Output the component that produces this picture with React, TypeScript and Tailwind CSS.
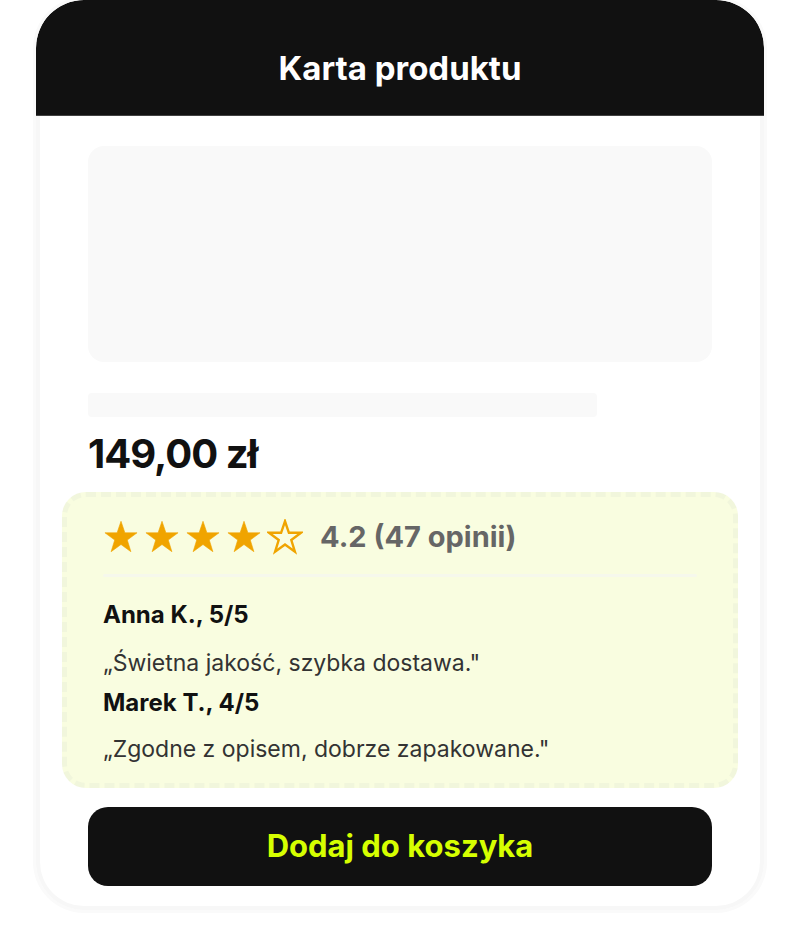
import React from "react";

function Star({ filled }: { filled: boolean }) {
  return (
    <svg width="36" height="36" viewBox="0 0 24 24" className="shrink-0">
      <polygon
        points="12,1.5 14.6,9.2 22.7,9.2 16.2,14 18.6,21.8 12,17 5.4,21.8 7.8,14 1.3,9.2 9.4,9.2"
        fill={filled ? "#f0a400" : "none"}
        stroke="#f0a400"
        strokeWidth={filled ? 0.4 : 1.6}
        strokeLinejoin="miter"
      />
    </svg>
  );
}

export default function App() {
  return (
    <div className="w-[800px] h-[946px] bg-white font-['Inter','Liberation_Sans',sans-serif] flex justify-center">
      <div className="w-[728px] h-[910px] flex flex-col rounded-[48px] bg-white shadow-[inset_0_0_0_4px_#f7f7f7,0_0_0_3px_#fafafa] overflow-hidden">
        <div className="h-[116px] bg-[#111111] flex items-center justify-center pt-[20px] rounded-t-[48px] border-b border-[#8a8a8a]/40">
          <h1 className="text-white text-[33px] leading-[40px] font-bold">Karta produktu</h1>
        </div>
        <div className="flex flex-col px-[52px] pt-[30px]">
          <div className="h-[216px] rounded-[16px] bg-[#f9f9f9]" />
          <div className="mt-[31px] h-[24px] w-[509px] rounded-[4px] bg-[#f9f9f9]" />
          <div className="mt-[16px] text-[40px] leading-[41px] font-bold text-[#111111] tracking-[-1px]">149,00 zł</div>
          <div className="-mx-[26px] mt-[18px] h-[296px] rounded-[24px] border-[5px] border-dashed border-[#f1f6dc] bg-[#f9fde0] px-[36px] pt-[22px]">
            <div className="flex items-center">
              <div className="flex items-center gap-[5px]">
                <Star filled />
                <Star filled />
                <Star filled />
                <Star filled />
                <Star filled={false} />
              </div>
              <span className="ml-[17px] text-[29px] leading-[36px] font-bold text-[#666666]">4.2 (47 opinii)</span>
            </div>
            <div className="mt-[19px] h-[3px] bg-[#f6f8ec] rounded" />
            <div className="mt-[23px] text-[24px] leading-[30px] font-bold text-[#111111]">Anna K., 5/5</div>
            <div className="mt-[18px] text-[23px] leading-[30px] text-[#333333]">„Świetna jakość, szybka dostawa."</div>
            <div className="mt-[10px] text-[24px] leading-[30px] font-bold text-[#111111]">Marek T., 4/5</div>
            <div className="mt-[16px] text-[23px] leading-[30px] text-[#333333]">„Zgodne z opisem, dobrze zapakowane."</div>
          </div>
          <button className="mt-[19px] h-[79px] rounded-[20px] bg-[#111111] flex items-center justify-center text-[31px] font-bold text-[#d6ff00]">
            Dodaj do koszyka
          </button>
        </div>
      </div>
    </div>
  );
}
